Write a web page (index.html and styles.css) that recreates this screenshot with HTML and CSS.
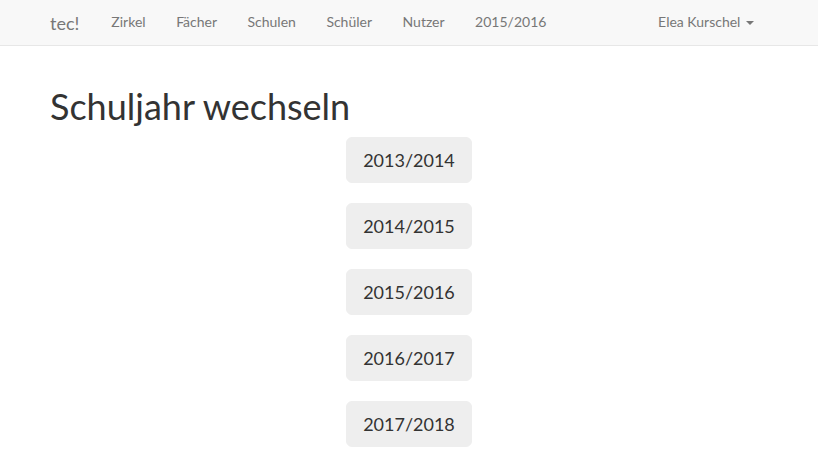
FILE: index.html
```html
<!DOCTYPE html>
<html lang="de">
<head>
<meta charset="utf-8">
<title>Schuljahr wechseln</title>
<link rel="stylesheet" href="styles.css">
</head>
<body>
<nav class="navbar">
  <div class="container nav-inner">
    <a class="brand" href="#">tec!</a>
    <ul class="nav">
      <li><a href="#">Zirkel</a></li>
      <li><a href="#">Fächer</a></li>
      <li><a href="#">Schulen</a></li>
      <li><a href="#">Schüler</a></li>
      <li><a href="#">Nutzer</a></li>
      <li><a href="#">2015/2016</a></li>
    </ul>
    <ul class="nav nav-right">
      <li><a href="#">Elea Kurschel <span class="caret"></span></a></li>
    </ul>
  </div>
</nav>
<main class="container">
  <h1 class="title">Schuljahr wechseln</h1>
  <div class="years">
    <a class="btn" href="#">2013/2014</a>
    <a class="btn" href="#">2014/2015</a>
    <a class="btn" href="#">2015/2016</a>
    <a class="btn" href="#">2016/2017</a>
    <a class="btn" href="#">2017/2018</a>
  </div>
</main>
</body>
</html>
```

FILE: styles.css
```css
* { box-sizing: border-box; }
html, body { margin: 0; padding: 0; }
body {
  font-family: Lato, "Open Sans", sans-serif;
  font-size: 14px;
  line-height: 20px;
  color: #333;
  background: #fff;
}
a { text-decoration: none; }
.container {
  width: 750px;
  margin: 0 auto;
  padding: 0 15px;
}
.navbar {
  background: #f8f8f8;
  border-bottom: 1px solid #e7e7e7;
  height: 46px;
}
.nav-inner {
  display: flex;
  align-items: center;
  height: 45px;
}
.brand {
  font-size: 18px;
  color: #777;
  line-height: 20px;
  padding: 0 17px 0 1px;
}
.nav {
  list-style: none;
  margin: 0;
  padding: 0;
  display: flex;
}
.nav a {
  display: block;
  padding: 12px 15px 13px;
  color: #777;
  line-height: 20px;
}
.nav li + li a {
  padding-left: 15.5px;
}
.nav-right {
  margin-left: auto;
}
.nav-right a {
  padding-right: 15px;
}
.caret {
  display: inline-block;
  width: 0;
  height: 0;
  margin-left: 2px;
  vertical-align: middle;
  border-top: 4px solid #777;
  border-left: 4px solid transparent;
  border-right: 4px solid transparent;
}
.title {
  font-size: 36px;
  font-weight: 400;
  line-height: 40px;
  margin: 40px 0 11px 1px;
  color: #333;
}
.years {
  display: flex;
  flex-direction: column;
  align-items: center;
  gap: 20px;
}
.btn {
  display: inline-block;
  background: #eee;
  color: #333;
  font-size: 18px;
  line-height: 24px;
  padding: 10px 16px;
  border: 1px solid #eee;
  border-radius: 6px;
}
```
